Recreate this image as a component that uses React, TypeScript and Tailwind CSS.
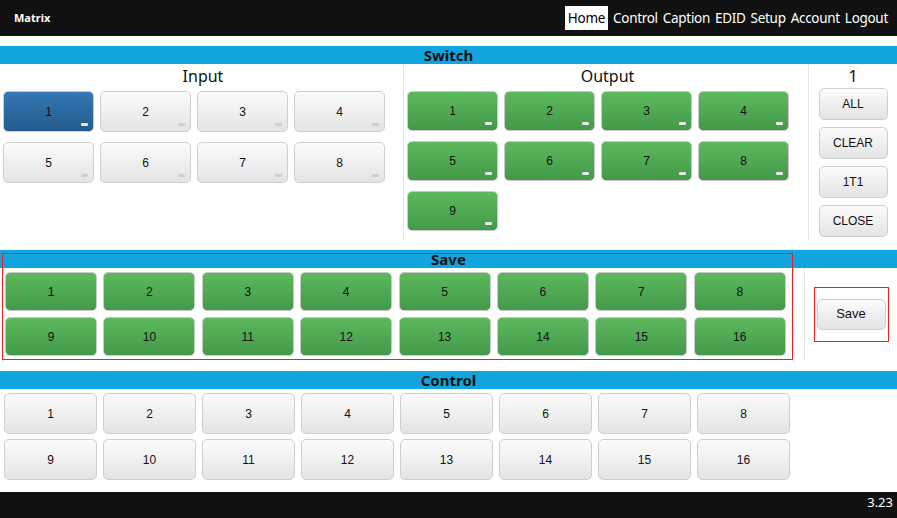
import React from "react";

type Tone = "gray" | "green" | "blue";

const toneClass: Record<Tone, string> = {
  gray: "bg-gradient-to-b from-[#fbfbfb] to-[#e4e4e4] border-[#cfcfcf]",
  green: "bg-gradient-to-b from-[#5db95d] to-[#43994a] border-[#c9c9c9]",
  blue: "bg-gradient-to-b from-[#3478b4] to-[#255a8c] border-[#c9c9c9]",
};

function Btn({
  label,
  tone = "gray",
  mark = false,
  className = "",
}: {
  label: string;
  tone?: Tone;
  mark?: boolean;
  className?: string;
}) {
  return (
    <div
      className={`relative flex items-center justify-center rounded-[5px] border text-[12px] text-[#111] ${toneClass[tone]} ${className}`}
      style={{ fontFamily: '"Liberation Sans", Arial, sans-serif' }}
    >
      {label}
      {mark && (
        <span
          className={`absolute right-[5px] bottom-[5px] h-[3px] w-[7px] rounded-[1px] ${
            tone === "gray" ? "bg-[#d0d0d0]" : "bg-[#e9e9e9]"
          }`}
        />
      )}
    </div>
  );
}

function Bar({ title }: { title: string }) {
  return (
    <div className="flex h-[18px] items-center justify-center bg-[#10a5de] text-[15px] font-bold leading-none text-[#111]">
      {title}
    </div>
  );
}

const nav = ["Home", "Control", "Caption", "EDID", "Setup", "Account", "Logout"];
const sixteen = Array.from({ length: 16 }, (_, i) => String(i + 1));

export default function App() {
  return (
    <div
      className="relative flex h-[518px] w-[897px] flex-col overflow-hidden bg-white"
      style={{ fontFamily: '"Noto Sans", "Open Sans", sans-serif' }}
    >
      {/* header */}
      <div className="flex h-[36px] items-center justify-between bg-[#111] pl-[14px] pr-[9px]">
        <span className="text-[11px] font-bold text-white">Matrix</span>
        <div className="flex items-center gap-[5px] text-[13.5px] tracking-[-0.3px] text-white">
          {nav.map((n) =>
            n === "Home" ? (
              <span key={n} className="flex h-[24px] items-center bg-white px-[3px] text-black">
                {n}
              </span>
            ) : (
              <span key={n}>{n}</span>
            )
          )}
        </div>
      </div>

      <div className="h-[10px]" />
      <Bar title="Switch" />

      {/* switch */}
      <div className="flex h-[176px]">
        <div className="w-[404px] border-r border-[#e6e6e6] pl-[3px]">
          <div className="h-[24px] pt-[1px] text-center text-[16px] leading-[22px] text-[#111]">Input</div>
          <div className="mt-[3px] grid grid-cols-[repeat(4,91px)] gap-x-[6px] gap-y-[10px]">
            {["1", "2", "3", "4", "5", "6", "7", "8"].map((n) => (
              <Btn key={n} label={n} mark tone={n === "1" ? "blue" : "gray"} className="h-[41px]" />
            ))}
          </div>
        </div>
        <div className="w-[405px] border-r border-[#e6e6e6] pl-[3px]">
          <div className="h-[24px] pt-[1px] text-center text-[16px] leading-[22px] text-[#111]">Output</div>
          <div className="mt-[3px] grid grid-cols-[repeat(4,91px)] gap-x-[6px] gap-y-[10px]">
            {["1", "2", "3", "4", "5", "6", "7", "8", "9"].map((n) => (
              <Btn key={n} label={n} mark tone="green" className="h-[40px]" />
            ))}
          </div>
        </div>
        <div className="flex flex-1 flex-col items-center">
          <div className="h-[24px] pt-[1px] text-center text-[16px] leading-[22px] text-[#111]">1</div>
          <div className="flex flex-col gap-[7px]">
            {["ALL", "CLEAR", "1T1", "CLOSE"].map((n) => (
              <Btn key={n} label={n} className="h-[32px] w-[69px]" />
            ))}
          </div>
        </div>
      </div>

      <div className="h-[9px]" />
      <div className="h-[1px] bg-[#e8f4fa]" />
      <Bar title="Save" />

      {/* save */}
      <div className="flex h-[92px]">
        <div className="w-[805px] border-r border-[#e6e6e6] pl-[5px] pt-[4px]">
          <div className="grid grid-cols-[repeat(8,92px)] gap-x-[6.4px] gap-y-[6px]">
            {sixteen.map((n) => (
              <Btn key={n} label={n} tone="green" className="h-[39px]" />
            ))}
          </div>
        </div>
        <div className="flex flex-1 items-center justify-center">
          <div className="border border-[#ee2020] px-[2px] py-[11px]">
            <Btn label="Save" className="h-[31px] w-[69px] text-[13px]" />
          </div>
        </div>
      </div>

      <div className="h-[11px]" />
      <Bar title="Control" />

      {/* control */}
      <div className="flex-1 pl-[4px] pt-[4px]">
        <div className="grid grid-cols-[repeat(8,93px)] gap-x-[6px] gap-y-[5px]">
          {sixteen.map((n) => (
            <Btn key={n} label={n} className="h-[41px]" />
          ))}
        </div>
      </div>

      {/* footer */}
      <div className="flex h-[26px] items-start justify-end bg-[#111] pr-[4px] pt-[1px] text-[13px] text-white">
        3.23
      </div>

      {/* highlight around save buttons */}
      <div className="pointer-events-none absolute left-[2px] top-[253px] h-[107px] w-[791px] border border-[#ee2020]" />
    </div>
  );
}
